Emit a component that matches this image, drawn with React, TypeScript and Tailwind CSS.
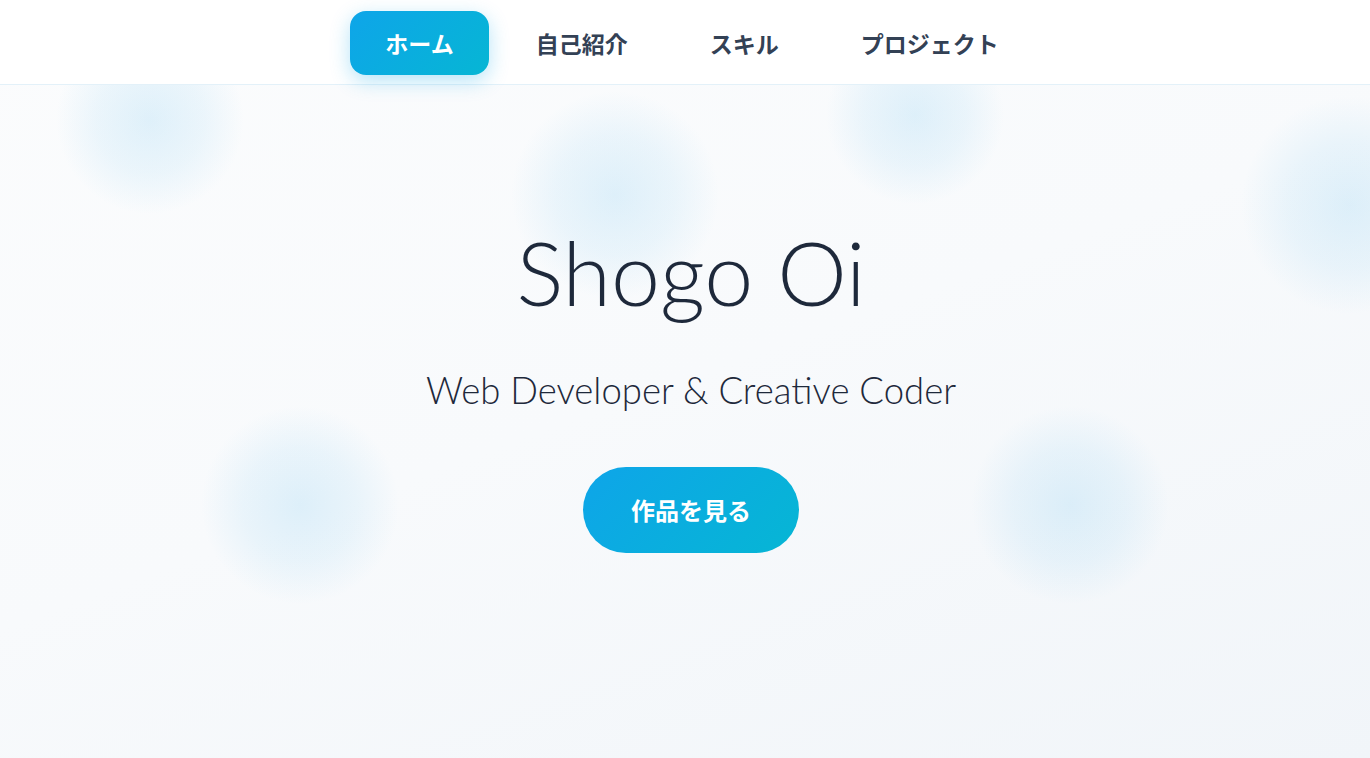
import React from "react";

const navItems = ["ホーム", "自己紹介", "スキル", "プロジェクト"];

function Blob({ className }: { className: string }) {
  return (
    <div
      className={
        "pointer-events-none absolute rounded-full bg-[radial-gradient(circle,rgba(125,200,240,0.22)_0%,rgba(125,200,240,0.12)_40%,rgba(125,200,240,0)_70%)] " +
        className
      }
    />
  );
}

export default function App() {
  return (
    <div
      className="relative flex h-[758px] w-full flex-col overflow-hidden bg-[linear-gradient(160deg,#fbfcfd_0%,#f8fafc_50%,#f1f5f9_100%)]"
      style={{ fontFamily: '"Noto Sans CJK JP", sans-serif' }}
    >
      <Blob className="left-[55px] top-[25px] h-[190px] w-[190px]" />
      <Blob className="left-[510px] top-[90px] h-[210px] w-[210px]" />
      <Blob className="left-[825px] top-[25px] h-[180px] w-[180px]" />
      <Blob className="left-[1240px] top-[95px] h-[220px] w-[220px]" />
      <Blob className="left-[200px] top-[405px] h-[200px] w-[200px]" />
      <Blob className="left-[970px] top-[405px] h-[200px] w-[200px]" />

      <nav className="relative z-10 flex h-[85px] shrink-0 items-center justify-center gap-[12px] border-b border-[#e3f1f9] bg-white pl-[14px] pt-[2px]">
        {navItems.map((item, i) => (
          <a
            key={item}
            className={
              "flex h-16 items-center rounded-2xl px-[35px] text-[23px] font-bold " +
              (i === 0
                ? "bg-[linear-gradient(135deg,#0ea5e9,#06b6d4)] text-white shadow-[0_6px_20px_rgba(14,165,233,0.3)]"
                : "text-[#334155]")
            }
          >
            {item}
          </a>
        ))}
      </nav>

      <main className="relative z-10 flex flex-1 flex-col items-center pl-[12px] pt-[143px]">
        <h1
          className="text-[88px] font-light leading-none text-[#1e293b]"
          style={{ fontFamily: 'Lato, "Noto Sans CJK JP", sans-serif' }}
        >
          Shogo Oi
        </h1>
        <p
          className="mt-[56px] text-[36.5px] font-light leading-none text-[#1e293b]"
          style={{ fontFamily: 'Lato, "Noto Sans CJK JP", sans-serif' }}
        >
          Web Developer &amp; Creative Coder
        </p>
        <button className="mt-[58px] flex h-[86px] w-[216px] items-center justify-center rounded-full bg-[linear-gradient(135deg,#0ea5e9,#06b6d4)] text-[24px] font-bold text-white">
          作品を見る
        </button>
      </main>
    </div>
  );
}
